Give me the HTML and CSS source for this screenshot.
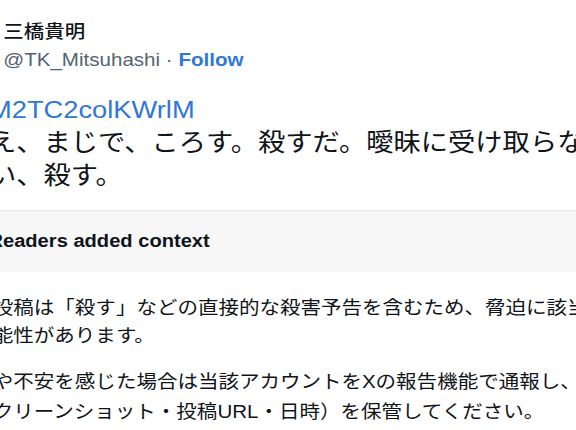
FILE: index.html
```html
<!DOCTYPE html>
<html lang="ja">
<head>
<meta charset="utf-8">
<title>Tweet</title>
<link rel="stylesheet" href="styles.css">
</head>
<body>
<div class="page">
  <header class="author">
    <div class="author-name">三橋貴明</div>
    <div class="author-meta"><span class="handle">@TK_Mitsuhashi</span><span class="sep"> · </span><a class="follow">Follow</a></div>
  </header>
  <p class="tweet-body"><a class="tweet-link">M2TC2colKWrlM</a><br>え、まじで、ころす。殺すだ。曖昧に受け取らない、殺す。</p>
  <section class="note">
    <div class="note-head">Readers added context</div>
    <div class="note-body">
      <p>投稿は「殺す」などの直接的な殺害予告を含むため、脅迫に該当<br>能性があります。</p>
      <p>や不安を感じた場合は当該アカウントを<span class="latin">X</span>の報告機能で通報し、<br>クリーンショット・投稿<span class="latin">URL</span>・日時）を保管してください。</p>
    </div>
  </section>
</div>
</body>
</html>
```

FILE: styles.css
```css
html, body {
  margin: 0;
  padding: 0;
  background: #ffffff;
  overflow: hidden;
}

.page {
  width: 524px;
  height: 430px;
  transform: scaleX(1.1);
  transform-origin: left top;
  color: #0f1419;
  font-family: "Liberation Sans", "Noto Sans CJK JP", sans-serif;
}

.author {
  padding: 18px 0 0 3px;
}

.author-name {
  font-family: "Noto Sans CJK JP", sans-serif;
  font-size: 18.6px;
  line-height: 24px;
  font-weight: 500;
}

.author-meta {
  margin-top: 6px;
  font-size: 18.7px;
  line-height: 24px;
  color: #536471;
  white-space: nowrap;
}

.follow {
  color: #2f78d6;
  font-weight: 700;
}

.tweet-body {
  margin: 21px 0 0 -10px;
  width: 546px;
  font-size: 24.8px;
  line-height: 33px;
  padding-bottom: 18px;
}

.tweet-link {
  color: #2f78d6;
}

.note {
  margin-left: -20px;
  width: 600px;
  border-top: 1px solid #e3e8ec;
}

.note-head {
  background: #f7f7f7;
  padding: 18px 0 19px 9.5px;
  font-size: 18.3px;
  line-height: 24px;
  font-weight: 700;
}

.note-body {
  padding: 20px 0 0 13.5px;
  font-family: "Noto Sans CJK JP", sans-serif;
  font-size: 18.65px;
  line-height: 28px;
  white-space: nowrap;
}

.note-body p {
  margin: 0 0 18px 0;
}

.latin {
  font-family: "Liberation Sans", sans-serif;
}
```
